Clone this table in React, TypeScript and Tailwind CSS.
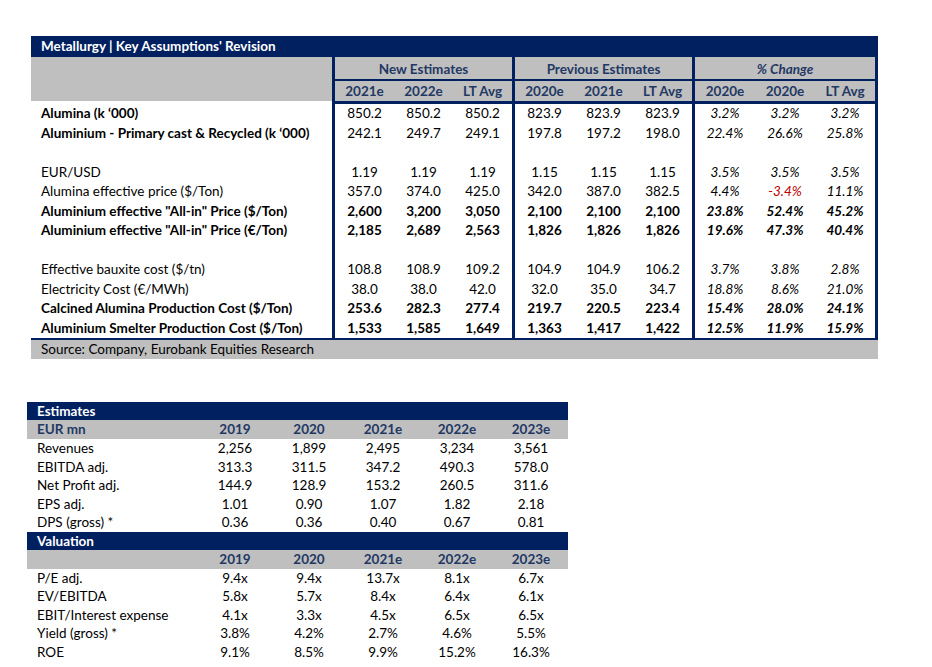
const NAVY = "bg-[#002060]";

type Row = {
  label: string;
  bold?: boolean;
  vb?: boolean;
  vals?: string[];
  chg?: string[];
  red?: number;
};

const rows: Row[] = [
  { label: "Alumina (k ‘000)", bold: true, vals: ["850.2", "850.2", "850.2", "823.9", "823.9", "823.9"], chg: ["3.2%", "3.2%", "3.2%"] },
  { label: "Aluminium - Primary cast & Recycled (k ‘000)", bold: true, vals: ["242.1", "249.7", "249.1", "197.8", "197.2", "198.0"], chg: ["22.4%", "26.6%", "25.8%"] },
  { label: "" },
  { label: "EUR/USD", vals: ["1.19", "1.19", "1.19", "1.15", "1.15", "1.15"], chg: ["3.5%", "3.5%", "3.5%"] },
  { label: "Alumina effective price ($/Ton)", vals: ["357.0", "374.0", "425.0", "342.0", "387.0", "382.5"], chg: ["4.4%", "-3.4%", "11.1%"], red: 1 },
  { label: 'Aluminium effective "All-in" Price ($/Ton)', bold: true, vb: true, vals: ["2,600", "3,200", "3,050", "2,100", "2,100", "2,100"], chg: ["23.8%", "52.4%", "45.2%"] },
  { label: 'Aluminium effective "All-in" Price (€/Ton)', bold: true, vb: true, vals: ["2,185", "2,689", "2,563", "1,826", "1,826", "1,826"], chg: ["19.6%", "47.3%", "40.4%"] },
  { label: "" },
  { label: "Effective bauxite cost ($/tn)", vals: ["108.8", "108.9", "109.2", "104.9", "104.9", "106.2"], chg: ["3.7%", "3.8%", "2.8%"] },
  { label: "Electricity Cost (€/MWh)", vals: ["38.0", "38.0", "42.0", "32.0", "35.0", "34.7"], chg: ["18.8%", "8.6%", "21.0%"] },
  { label: "Calcined Alumina Production Cost ($/Ton)", bold: true, vb: true, vals: ["253.6", "282.3", "277.4", "219.7", "220.5", "223.4"], chg: ["15.4%", "28.0%", "24.1%"] },
  { label: "Aluminium Smelter Production Cost ($/Ton)", bold: true, vb: true, vals: ["1,533", "1,585", "1,649", "1,363", "1,417", "1,422"], chg: ["12.5%", "11.9%", "15.9%"] },
];

const estimates = [
  ["Revenues", "2,256", "1,899", "2,495", "3,234", "3,561"],
  ["EBITDA adj.", "313.3", "311.5", "347.2", "490.3", "578.0"],
  ["Net Profit adj.", "144.9", "128.9", "153.2", "260.5", "311.6"],
  ["EPS adj.", "1.01", "0.90", "1.07", "1.82", "2.18"],
  ["DPS (gross) *", "0.36", "0.36", "0.40", "0.67", "0.81"],
];

const valuation = [
  ["P/E adj.", "9.4x", "9.4x", "13.7x", "8.1x", "6.7x"],
  ["EV/EBITDA", "5.8x", "5.7x", "8.4x", "6.4x", "6.1x"],
  ["EBIT/Interest expense", "4.1x", "3.3x", "4.5x", "6.5x", "6.5x"],
  ["Yield (gross) *", "3.8%", "4.2%", "2.7%", "4.6%", "5.5%"],
  ["ROE", "9.1%", "8.5%", "9.9%", "15.2%", "16.3%"],
];

const years = ["2019", "2020", "2021e", "2022e", "2023e"];

function Group({ cells, last, italic, bold, red, w }: { cells: string[]; last?: boolean; italic?: boolean; bold?: boolean; red?: number; w: string }) {
  return (
    <div className={`flex border-l-[3px] border-[#002060] ${last ? "border-r-[3px]" : ""}`}>
      {cells.map((c, i) => (
        <div
          key={i}
          className={`${w} text-center ${italic ? "italic" : ""} ${bold ? "font-bold" : ""} ${red === i ? "text-[#c00000]" : ""}`}
        >
          {c}
        </div>
      ))}
    </div>
  );
}

function SmallTable({ title, label, data }: { title: string; label: string; data: string[][] }) {
  return (
    <div>
      <div className={`${NAVY} h-[18px] leading-[18px] pl-[10px] text-white font-bold`}>{title}</div>
      <div className="flex h-[19px] leading-[19px] bg-[#bfbfbf] text-[#1f3864] font-bold">
        <div className="w-[171px] pl-[10px]">{label}</div>
        {years.map((y) => (
          <div key={y} className="w-[74px] text-center">{y}</div>
        ))}
      </div>
      {data.map((r) => (
        <div key={r[0]} className="flex h-[18.5px] leading-[18.5px]">
          <div className="w-[171px] pl-[10px]">{r[0]}</div>
          {r.slice(1).map((v, i) => (
            <div key={i} className="w-[74px] text-center">{v}</div>
          ))}
        </div>
      ))}
    </div>
  );
}

export default function App() {
  return (
    <div className="w-[932px] h-[667px] bg-white overflow-hidden text-[13.5px] text-black" style={{ fontFamily: "Lato, 'Open Sans', sans-serif" }}>
      <div className="pt-[36px] pl-[31px]">
        <div className="w-[847px]">
          <div className={`${NAVY} h-[21px] leading-[21px] pl-[10px] text-white font-bold`}>Metallurgy | Key Assumptions' Revision</div>
          <div className="flex">
            <div className="w-[301px] h-[44px] bg-[#bfbfbf]" />
            {[
              { t: "New Estimates", y: ["2021e", "2022e", "LT Avg"], w: "w-[59px]" },
              { t: "Previous Estimates", y: ["2020e", "2021e", "LT Avg"], w: "w-[59px]" },
              { t: "% Change", y: ["2020e", "2020e", "LT Avg"], w: "w-[60px]", last: true, it: true },
            ].map((g) => (
              <div key={g.t} className={`border-l-[3px] border-b-[3px] border-[#002060] ${g.last ? "border-r-[3px]" : ""}`}>
                <div className={`h-[24px] leading-[24px] bg-[#bfbfbf] text-center font-bold text-[#1f3864] border-b-[2px] border-[#002060] ${g.it ? "italic" : ""}`}>{g.t}</div>
                <div className="flex h-[20px] leading-[20px] bg-[#bfbfbf]">
                  {g.y.map((y, i) => (
                    <div key={i} className={`${g.w} text-center font-bold text-[#1f3864]`}>{y}</div>
                  ))}
                </div>
              </div>
            ))}
          </div>
          <div className="border-b-[2px] border-[#002060]">
            {rows.map((r, ri) => {
              const v = r.vals ?? ["", "", "", "", "", ""];
              const c = r.chg ?? ["", "", ""];
              return (
                <div key={ri} className="flex h-[19.5px] leading-[19.5px]">
                  <div className={`w-[301px] pl-[10px] ${r.bold ? "font-bold" : ""}`}>{r.label}</div>
                  <Group cells={v.slice(0, 3)} bold={r.vb} w="w-[59px]" />
                  <Group cells={v.slice(3, 6)} bold={r.vb} w="w-[59px]" />
                  <Group cells={c} bold={r.vb} italic red={r.red} last w="w-[60px]" />
                </div>
              );
            })}
          </div>
          <div className="bg-[#bfbfbf] h-[19px] leading-[19px] pl-[10px]">Source: Company, Eurobank Equities Research</div>
        </div>
      </div>
      <div className="pl-[27px] pt-[43px] w-[568px]">
        <SmallTable title="Estimates" label="EUR mn" data={estimates} />
        <SmallTable title="Valuation" label="" data={valuation} />
      </div>
    </div>
  );
}
